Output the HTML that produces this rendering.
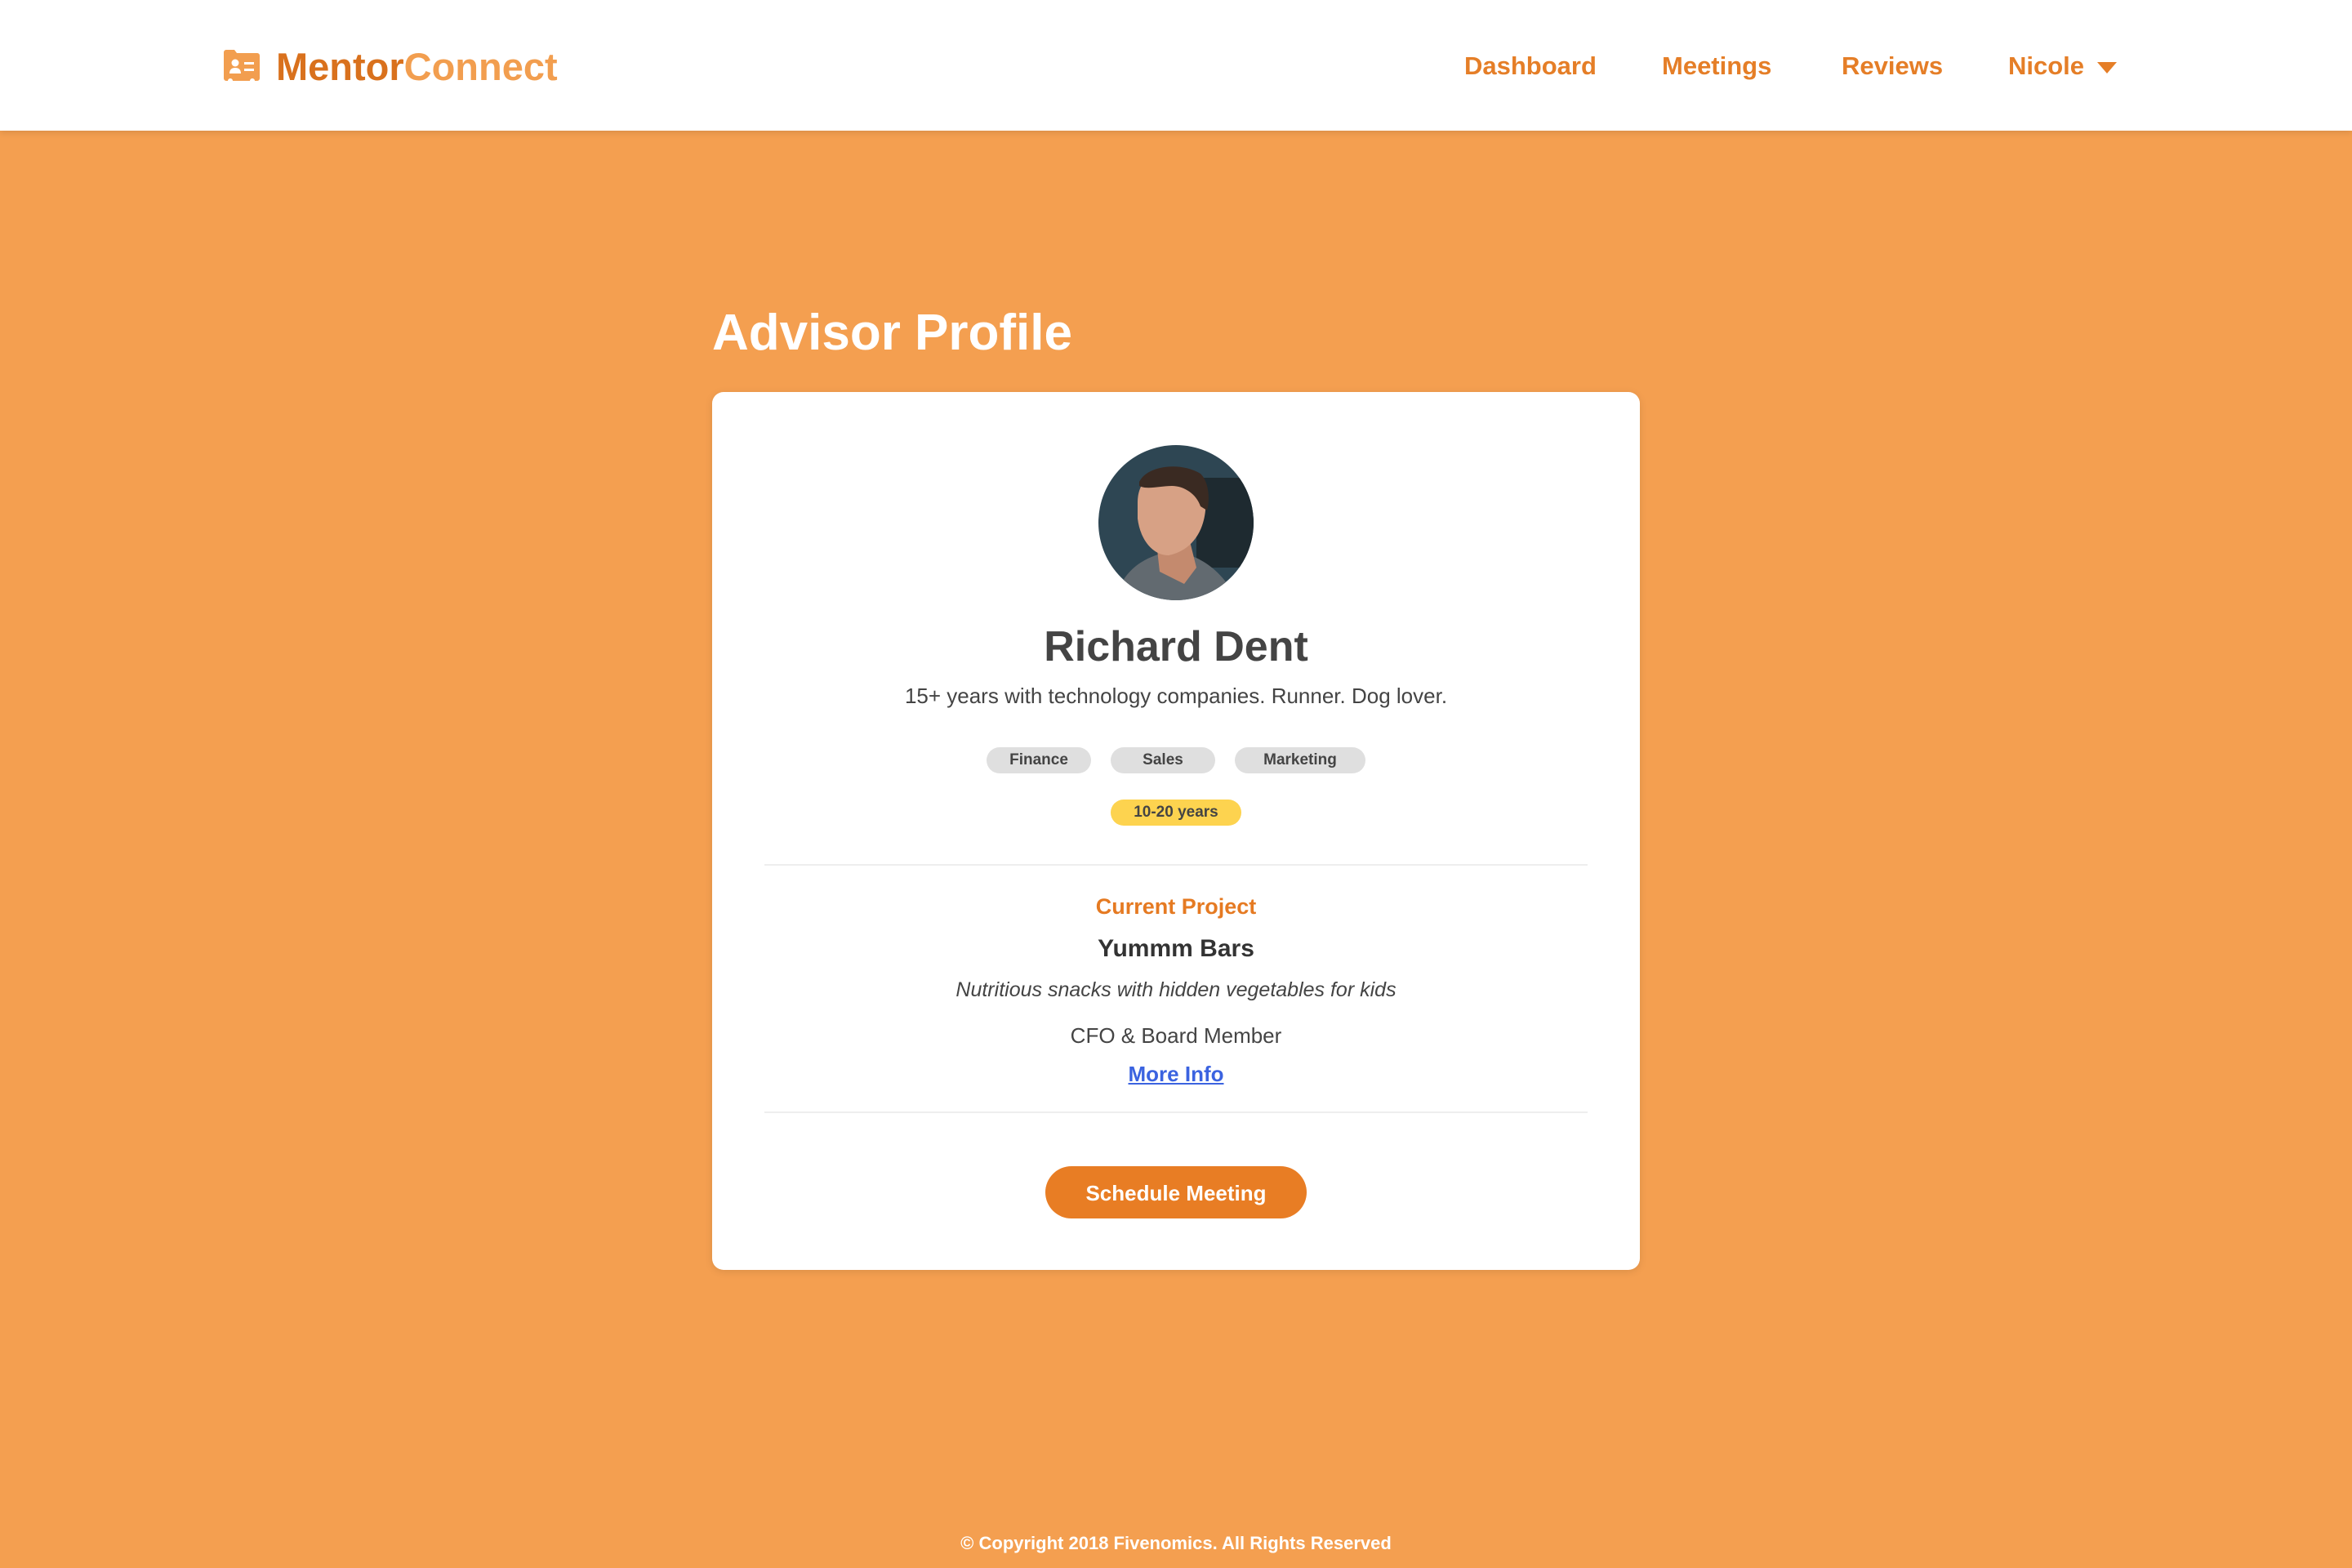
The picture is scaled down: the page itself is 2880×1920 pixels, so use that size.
<!DOCTYPE html>
<html><head><meta charset="utf-8"><style>
*{margin:0;padding:0;box-sizing:border-box}
body{width:2880px;height:1920px;background:#F49F50;font-family:"Liberation Sans",sans-serif;position:relative;overflow:hidden}
.hdr{position:absolute;left:0;top:0;width:2880px;height:160px;background:#fff;box-shadow:0 2px 8px rgba(0,0,0,.12)}
.logo{position:absolute;left:338px;top:54px;font-size:47px;font-weight:bold}
.nav{position:absolute;top:63px;font-size:31px;font-weight:bold;color:#E57E27}
.title{position:absolute;left:872px;top:372px;font-size:62px;font-weight:bold;color:#fff}
.card{position:absolute;left:872px;top:480px;width:1136px;height:1075px;background:#fff;border-radius:14px;box-shadow:0 2px 10px rgba(0,0,0,.1)}
.c{position:absolute;left:0;width:1136px;text-align:center;color:#444}
.tag{position:absolute;height:32px;border-radius:16px;background:#DFDFDF;font-size:19px;font-weight:bold;color:#444;text-align:center;line-height:32px}
.hr{position:absolute;left:64px;width:1008px;height:2px;background:#eee}
</style></head><body>
<div class="hdr">
<svg style="position:absolute;left:272px;top:60px" width="48" height="42" viewBox="0 0 48 42"><path d="M2 4a3 3 0 0 1 3-3h10l3 4h25a3 3 0 0 1 3 3v28a3 3 0 0 1-3 3h-3a3 3 0 0 0-6 0H13a3 3 0 0 0-6 0H5a3 3 0 0 1-3-3z" fill="#F29E4F"/><circle cx="16" cy="17" r="4.5" fill="#fff"/><path d="M9 30c0-5 3-7 7-7s7 2 7 7z" fill="#fff"/><rect x="27" y="16" width="12" height="3" fill="#fff"/><rect x="27" y="24" width="12" height="3" fill="#fff"/></svg>
<div class="logo"><span style="color:#D9711D">Mentor</span><span style="color:#F29E4F">Connect</span></div>
<div class="nav" style="left:1793px">Dashboard</div>
<div class="nav" style="left:2035px">Meetings</div>
<div class="nav" style="left:2255px">Reviews</div>
<div class="nav" style="left:2459px">Nicole</div>
<svg style="position:absolute;left:2568px;top:76px" width="24" height="14"><path d="M0 0h24L12 14z" fill="#E57E27"/></svg>
</div>
<div class="title">Advisor Profile</div>
<div class="card">
<svg style="position:absolute;left:473px;top:65px" width="190" height="190" viewBox="0 0 190 190"><defs><clipPath id="cp"><circle cx="95" cy="95" r="95"/></clipPath></defs><g clip-path="url(#cp)"><rect width="190" height="190" fill="#2E4653"/><rect x="120" y="40" width="70" height="110" fill="#1E2A30"/><path d="M20 190c10-40 40-55 70-60 30 3 60 20 80 60z" fill="#626A70"/><path d="M70 110l40 0 10 40-15 20-30-15z" fill="#C48A6E"/><path d="M48 70c0-30 25-45 50-40 25 5 35 25 33 50-3 30-20 50-45 55-20 0-35-20-38-45z" fill="#D7A185"/><path d="M50 45c10-20 50-25 75-10 10 10 12 30 8 45l-8-5c-5-15-20-25-35-25-15 0-30 5-40 0z" fill="#3A2A22"/></g></svg>
<div class="c" style="top:282px;font-size:52px;font-weight:bold">Richard Dent</div>
<div class="c" style="top:357px;font-size:26px">15+ years with technology companies. Runner. Dog lover.</div>
<div class="tag" style="left:336px;top:435px;width:128px">Finance</div>
<div class="tag" style="left:488px;top:435px;width:128px">Sales</div>
<div class="tag" style="left:640px;top:435px;width:160px">Marketing</div>
<div class="tag" style="left:488px;top:499px;width:160px;background:#FDD34F">10-20 years</div>
<div class="hr" style="top:578px"></div>
<div class="c" style="top:615px;font-size:27px;font-weight:bold;color:#E57A22">Current Project</div>
<div class="c" style="top:665px;font-size:30px;font-weight:bold;color:#333">Yummm Bars</div>
<div class="c" style="top:718px;font-size:25px;font-style:italic">Nutritious snacks with hidden vegetables for kids</div>
<div class="c" style="top:773px;font-size:26px">CFO &amp; Board Member</div>
<div class="c" style="top:820px;font-size:26px;font-weight:bold;color:#3B63E0;text-decoration:underline">More Info</div>
<div class="hr" style="top:881px"></div>
<div style="position:absolute;left:408px;top:948px;width:320px;height:64px;border-radius:32px;background:#E87D24;color:#fff;font-size:26px;font-weight:bold;text-align:center;line-height:66px">Schedule Meeting</div>
</div>
<div style="position:absolute;left:0;top:1877px;width:2880px;text-align:center;color:#fff;font-size:22px;font-weight:bold">© Copyright 2018 Fivenomics. All Rights Reserved</div>
</body></html>
